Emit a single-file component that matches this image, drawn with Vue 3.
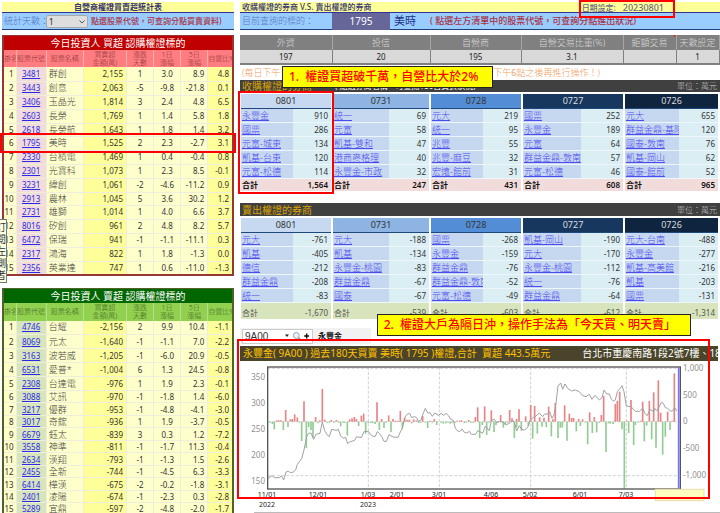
<script setup>
const buyRows = [
  ['3481', '群創', '2,155', '1', '3.0', '8.9', '4.8'],
  ['3443', '創意', '2,063', '-5', '-9.8', '-21.8', '0.1'],
  ['3406', '玉晶光', '1,814', '3', '2.4', '4.8', '6.5'],
  ['2603', '長榮', '1,769', '1', '1.4', '5.8', '1.8'],
  ['2618', '長榮航', '1,643', '1', '1.8', '1.4', '3.2'],
  ['1795', '美時', '1,525', '2', '2.3', '-2.7', '3.1'],
  ['2330', '台積電', '1,469', '1', '0.4', '-0.4', '0.8'],
  ['2301', '光寶科', '1,073', '1', '2.3', '8.5', '-0.1'],
  ['3231', '緯創', '1,061', '-2', '-4.6', '-11.2', '0.9'],
  ['2913', '農林', '1,045', '5', '3.6', '30.2', '1.2'],
  ['2731', '雄獅', '1,014', '1', '4.0', '6.6', '3.7'],
  ['8016', '矽創', '961', '2', '4.8', '8.2', '5.7'],
  ['6472', '保瑞', '941', '-1', '-1.1', '-11.1', '0.3'],
  ['2317', '鴻海', '822', '1', '1.8', '-1.3', '0.0'],
  ['2356', '英業達', '747', '1', '0.6', '-11.0', '-1.3'],
]
const sellRows = [
  ['4746', '台耀', '-2,156', '2', '9.9', '10.4', '-1.1'],
  ['8069', '元太', '-1,640', '-1', '-1.1', '7.0', '-2.2'],
  ['3163', '波若威', '-1,205', '-1', '-6.0', '20.9', '-0.5'],
  ['6531', '愛普*', '-1,004', '6', '1.3', '24.5', '-0.8'],
  ['2308', '台達電', '-976', '1', '1.9', '2.3', '-0.1'],
  ['3088', '艾訊', '-970', '-1', '-1.8', '1.4', '-6.0'],
  ['3217', '優群', '-953', '-1', '-4.8', '-4.1', '-3.0'],
  ['3017', '奇鋐', '-936', '1', '1.9', '-3.7', '-0.5'],
  ['6679', '鈺太', '-839', '3', '0.3', '1.2', '-7.2'],
  ['3558', '神準', '-811', '-1', '-1.7', '11.3', '-0.4'],
  ['2634', '漢翔', '-793', '-1', '-1.3', '1.5', '-2.6'],
  ['2455', '全新', '-744', '-1', '-4.5', '6.3', '-3.3'],
  ['6414', '樺漢', '-675', '-2', '-0.2', '-1.8', '-3.1'],
  ['2401', '凌陽', '-674', '-1', '-2.3', '0.3', '-2.8'],
  ['5289', '宜鼎', '-597', '-2', '-4.8', '-2.0', '-1.7'],
]
const rankings = [
  { kind: 'buy', title: '今日投資人 買超 認購權證標的', rows: buyRows, marked: 5 },
  { kind: 'sell', title: '今日投資人 賣超 認購權證標的', rows: sellRows, marked: -1 },
]
const boughtBy = [
  { day: '0801', rows: [['永豐金', '910'], ['國票', '286'], ['元富-城東', '134'], ['凱基-台東', '120'], ['元富-松德', '114']], total: '1,564' },
  { day: '0731', rows: [['統一', '69'], ['元富', '58'], ['凱基-雙和', '47'], ['港商麥格理', '40'], ['永豐金-市政', '32']], total: '247' },
  { day: '0728', rows: [['元大', '219'], ['統一', '95'], ['兆豐', '55'], ['兆豐-麻豆', '32'], ['宏遠-館前', '31']], total: '431' },
  { day: '0727', rows: [['國票', '252'], ['永豐金', '189'], ['元富', '64'], ['群益金鼎-敦南', '57'], ['元富-松德', '46']], total: '608' },
  { day: '0726', rows: [['元大', '655'], ['群益金鼎-基隆', '120'], ['國泰-敦南', '76'], ['凱基-岡山', '62'], ['國泰-館前', '52']], total: '965' },
]
const soldBy = [
  { day: '0801', rows: [['元大', '-761'], ['凱基', '-405'], ['德信', '-212'], ['群益金鼎', '-208'], ['統一', '-83']], total: '-1,670' },
  { day: '0731', rows: [['元大', '-188'], ['凱基', '-134'], ['永豐金-桃園', '-83'], ['群益金鼎', '-67'], ['國泰', '-67']], total: '-539' },
  { day: '0728', rows: [['國票', '-268'], ['永豐金', '-159'], ['群益金鼎', '-76'], ['群益金鼎-敦南', '-52'], ['元富-松德', '-49']], total: '-603' },
  { day: '0727', rows: [['凱基-岡山', '-190'], ['元大', '-170'], ['永豐金-桃園', '-112'], ['統一', '-76'], ['群益金鼎', '-64']], total: '-612' },
  { day: '0726', rows: [['元大-台南', '-488'], ['永豐金', '-277'], ['凱基-高美館', '-216'], ['凱基', '-203'], ['國票', '-131']], total: '-1,314' },
]

// Chart data: the plot group is drawn at three units to the pixel, zero line at 245.
const ZERO = 245
const gains = [
  [122, 241], [128, 241], [135, 241], [149, 210], [163, 238], [169, 237], [176, 223], [184, 232], [204, 184], [239, 231],
  [251, 241], [259, 147], [266, 239], [286, 240], [301, 240], [341, 238], [348, 235], [355, 231], [361, 237], [376, 227],
  [383, 221], [423, 187], [437, 237], [458, 226], [471, 237], [479, 242], [486, 242], [493, 213], [506, 233], [513, 239],
  [520, 239], [533, 238], [541, 241], [560, 228], [582, 242], [595, 237], [664, 242], [671, 242], [677, 241], [698, 240],
  [718, 231], [725, 202], [746, 199], [766, 211], [787, 243], [794, 225], [821, 210], [828, 235], [842, 237], [849, 208],
  [869, 229], [884, 195], [896, 198], [911, 232], [924, 233], [938, 200], [951, 238], [958, 189], [986, 196], [1000, 221],
  [1007, 234], [1013, 234], [1028, 237], [1040, 238], [1061, 217], [1075, 231], [1096, 225], [1103, 168], [1138, 192],
  [1144, 183], [1151, 155], [1172, 242], [1185, 180], [1214, 242], [1220, 185], [1240, 183], [1253, 157], [1267, 121],
  [1274, 218], [1295, 215], [1309, 242], [1315, 100],
]
const losses = [
  [102, 248], [109, 252], [115, 268], [142, 270], [156, 261], [190, 248], [197, 303], [211, 324], [218, 262], [225, 270],
  [231, 293], [246, 250], [273, 248], [280, 248], [293, 248], [307, 248], [314, 259], [321, 248], [327, 248], [334, 287],
  [368, 258], [389, 281], [397, 249], [404, 248], [410, 249], [417, 252], [430, 270], [444, 264], [451, 248], [465, 276],
  [499, 266], [527, 250], [548, 249], [554, 248], [568, 248], [575, 264], [589, 248], [602, 255], [615, 248], [622, 251],
  [629, 250], [637, 248], [643, 251], [650, 248], [657, 248], [685, 249], [692, 248], [705, 248], [711, 248], [731, 294],
  [739, 255], [752, 285], [760, 248], [774, 276], [780, 255], [802, 263], [808, 255], [815, 248], [835, 294], [842, 262],
  [856, 272], [877, 258], [890, 296], [904, 281], [918, 260], [931, 261], [946, 289], [966, 294], [973, 263], [979, 263],
  [993, 302], [1021, 274], [1033, 258], [1048, 248], [1055, 313], [1069, 279], [1082, 277], [1089, 248], [1110, 336],
  [1117, 250], [1123, 251], [1131, 252], [1158, 268], [1165, 446], [1178, 279], [1193, 315], [1198, 255], [1207, 248],
  [1225, 304], [1232, 257], [1247, 298], [1260, 323], [1280, 344], [1288, 290], [1302, 270],
]
const price =
  '95,416 108,407 115,413 130,413 136,408 143,420 150,396 157,394 163,398 172,396 179,390 184,373 190,365 197,356 204,330 212,290 218,280 225,279 233,298 240,283 252,280 259,246 266,272 273,284 280,290 287,268 300,271 307,268 314,288 321,295 329,292 335,311 341,306 356,301 362,290 376,293 384,275 397,274 404,284 411,289 418,289 424,275 431,281 437,289 444,304 451,304 459,284 471,291 486,292 493,276 499,265 506,233 513,223 521,220 527,233 535,230 541,232 547,243 554,242 561,222 568,205 575,219 582,218 589,229 596,219 608,226 615,220 623,226 631,220 637,227 644,238 652,241 658,265 665,273 671,275 678,267 685,277 692,279 700,274 706,283 719,283 725,272 732,275 740,280 748,258 760,272 766,242 775,238 782,248 790,245 800,246 812,254 823,248 830,240 836,250 842,273 850,257 858,269 866,270 875,262 883,240 892,232 900,228 910,219 920,230 926,222 935,222 941,215 948,235 954,225 960,190 966,138 974,129 980,148 987,132 995,145 1007,153 1018,150 1030,155 1040,167 1050,170 1060,163 1068,178 1077,166 1090,180 1098,173 1104,150 1112,162 1120,162 1126,177 1132,183 1138,180 1144,155 1152,146 1158,137 1164,155 1171,198 1185,200 1198,214 1210,214 1220,205 1227,221 1234,227 1242,208 1253,215 1256,205 1262,212 1270,200 1276,187 1282,190 1288,203 1295,205 1303,213 1310,213 1316,203 1323,213'
const leftTicks = [[350, 380], [300, 406], [250, 432], [200, 458], [150, 484]]
const rightTicks = [['1,000', 371], ['500', 398], ['0', 424], ['-500', 451], ['-1,000', 478]]
const dateTicks = [['11/01', 267], ['12/01', 318], ['1/03', 368], ['2/01', 397], ['3/01', 439], ['4/06', 491], ['5/02', 530], ['6/01', 580], ['7/03', 626]]
</script>

<template>
  <main class="page">
    <aside class="left">
      <h1 class="banner center">自營商權證買賣超統計表</h1>
      <div class="strip">
        <label for="days">統計天數：</label>
        <span class="pick">
          <select id="days"><option>1</option></select>
          <svg viewBox="0 0 6 4" class="chev"><path d="M.5 .5 3 3 5.5 .5" fill="none" stroke="#555" /></svg>
        </span>
        <span class="hint">點選股票代號，可查詢分點買賣資料)</span>
      </div>

      <table v-for="r in rankings" :key="r.kind" class="rank" :class="r.kind">
        <colgroup>
          <col class="w-no" /><col class="w-code" /><col class="w-name" /><col class="w-amt" />
          <col class="w-d" /><col class="w-d" /><col class="w-d" /><col class="w-ratio" />
        </colgroup>
        <thead>
          <tr class="title"><th colspan="8">{{ r.title }}</th></tr>
          <tr class="heads">
            <th>排名</th><th>股票代號</th><th>股票名稱</th><th>買賣超<br />金額(萬)</th>
            <th>漲跌<br />天數</th><th>1日<br />漲幅</th><th>5日<br />漲幅</th><th>自營比%</th>
          </tr>
        </thead>
        <tbody>
          <tr v-for="(row, i) in r.rows" :key="row[0]" :class="{ marked: i === r.marked }">
            <td class="num">{{ i + 1 }}</td>
            <td class="code"><a href="#">{{ row[0] }}</a></td>
            <td class="name">{{ row[1] }}</td>
            <td class="num hot">{{ row[2] }}</td>
            <td class="mid">{{ row[3] }}</td>
            <td class="mid">{{ row[4] }}</td>
            <td class="num">{{ row[5] }}</td>
            <td class="num hot">{{ row[6] }}</td>
          </tr>
        </tbody>
      </table>
      <div class="side-tab">訂閱左側者</div>
    </aside>

    <section class="right">
      <div class="banner split">
        <h2>收購權證的券商 V.S. 賣出權證的券商</h2>
        <div class="date"><span>日期設定:</span><span class="date-value">20230801</span></div>
      </div>
      <div class="strip query">
        <span class="ask">目前查詢的標的：</span>
        <strong class="ticker">1795</strong>
        <span class="stock">美時</span>
        <span class="hint wide">( 點選左方清單中的股票代號，可查詢分點進出狀況)</span>
      </div>

      <table class="stats">
        <colgroup><col class="s1" /><col class="s2" /><col class="s3" /><col class="s4" /><col class="s5" /><col class="s6" /></colgroup>
        <thead><tr><th>外資</th><th>投信</th><th>自營商</th><th>自營交易比重(%)</th><th class="noted">鉅額交易</th><th>天數設定</th></tr></thead>
        <tbody><tr><td>197</td><td>20</td><td>195</td><td>3.1</td><td></td><td>1</td></tr></tbody>
      </table>

      <div class="notice">
        <span>(每日下午</span><span>下午<b>6</b>點之後再進行操作！)</span>
        <p class="callout first">1.&nbsp; 權證買超破千萬，自營比大於2%</p>
      </div>

      <div class="bar">
        <h3>收購權證的券商</h3><span class="bar-note">( 點選券商名稱，可查閱180日買賣狀況)</span><span class="unit">單位：萬元</span>
      </div>
      <div class="brokers bought">
        <table v-for="(g, i) in boughtBy" :key="g.day" :class="['g' + i, { framed: i === 0 }]">
          <colgroup><col class="w-who" /><col /></colgroup>
          <thead><tr><th colspan="2">{{ g.day }}</th></tr></thead>
          <tbody>
            <tr v-for="row in g.rows" :key="row[0]"><td class="who"><a href="#">{{ row[0] }}</a></td><td class="num">{{ row[1] }}</td></tr>
          </tbody>
          <tfoot><tr><td>合計</td><td class="num">{{ g.total }}</td></tr></tfoot>
        </table>
      </div>

      <div class="bar second"><h3>賣出權證的券商</h3><span class="unit">單位：萬元</span></div>
      <div class="brokers sold">
        <table v-for="(g, i) in soldBy" :key="g.day" :class="'g' + i">
          <colgroup><col class="w-who" /><col /></colgroup>
          <thead><tr><th colspan="2">{{ g.day }}</th></tr></thead>
          <tbody>
            <tr v-for="row in g.rows" :key="row[0]"><td class="who"><a href="#">{{ row[0] }}</a></td><td class="num">{{ row[1] }}</td></tr>
          </tbody>
          <tfoot><tr><td>合計</td><td class="num">{{ g.total }}</td></tr></tfoot>
        </table>
        <p class="callout last">2.&nbsp; 權證大戶為隔日沖，操作手法為「今天買、明天賣」</p>
      </div>

      <div class="finder">
        <div class="combo">
          <select aria-label="券商"><option>9A00</option></select>
          <svg viewBox="0 0 28 10" class="tools">
            <path d="M1 3.500h4L3 6z" fill="#222" />
            <circle cx="12.500" cy="4.500" r="3" fill="#e8f1fa" stroke="#9aa3b0" />
            <path d="M14.800 6.800 17 9" stroke="#a98a5c" stroke-width="1.500" />
            <path d="M20.500 5h5M23 2.500v5" stroke="#111" stroke-width="1.500" />
          </svg>
        </div>
        <b>永豐金</b>
      </div>

      <figure class="chart">
        <figcaption>
          <span>永豐金( 9A00 ) 過去180天買賣 美時( 1795 )權證,合計&nbsp; 賣超 443.5萬元</span>
          <span class="addr">台北市重慶南路1段2號7樓、18樓</span>
        </figcaption>
        <svg class="plot" viewBox="240 361 480 152">
          <g transform="translate(236 340) scale(.33333)" fill="none">
            <g stroke="#d2d2d2" stroke-width="3" stroke-dasharray="9 5">
              <path d="M95 85H1330M95 245H1330M95 407H1330M397 82V446M610 82V446M884 82V446M1171 82V446" />
            </g>
            <path v-for="b in losses" :key="'l' + b[0]" :d="`M${b[0]} ${ZERO}V${b[1]}`" stroke="#93cc93" stroke-width="5" />
            <path v-for="b in gains" :key="'g' + b[0]" :d="`M${b[0]} ${ZERO}V${b[1]}`" stroke="#e88484" stroke-width="5" />
            <polyline :points="price" stroke="#a0a0a0" stroke-width="3" stroke-linejoin="round" />
            <rect x="95" y="81" width="1238" height="366" stroke="#555" stroke-width="4" />
            <path d="M1328 83V445" stroke="#7474f4" stroke-width="5" />
            <rect x="1258" y="448" width="146" height="34" fill="#ffffc0" stroke="#e6dfa8" stroke-width="3" />
          </g>
          <g class="axis">
            <text v-for="t in leftTicks" :key="t[0]" x="265" :y="t[1]" text-anchor="end">{{ t[0] }}</text>
            <text v-for="t in rightTicks" :key="t[0]" x="683" :y="t[1]">{{ t[0] }}</text>
          </g>
          <g class="dates">
            <text v-for="t in dateTicks" :key="t[0]" :x="t[1]" y="497" text-anchor="middle">{{ t[0] }}</text>
            <text x="267" y="507" text-anchor="middle">2022</text>
            <text x="368" y="507" text-anchor="middle">2023</text>
          </g>
          <path d="M254 512.500H720" stroke="#bbb" />
        </svg>
        <div class="frame"></div>
      </figure>
    </section>
  </main>
</template>

<style>
body { margin: 0; background: #fff; }
</style>

<style scoped>
* { box-sizing: border-box; }
.page {
  display: grid;
  grid-template-columns: 232fr 480fr;
  column-gap: 6px;
  padding: 2px 0 0 2px;
  max-height: 100vh;
  overflow: hidden;
  font-family: "Noto Sans", "Noto Sans CJK TC", sans-serif;
  font-size: 8px;
  line-height: 12px;
  color: #333;
}
.left, .right { position: relative; min-width: 0; white-space: nowrap; }
h1, h2, h3, p, figure { margin: 0; font-size: inherit; font-weight: inherit; }
table { border-collapse: collapse; table-layout: fixed; width: 100%; }
th, td { padding: 0; font-weight: 400; overflow: hidden; }
a { color: #2a2ae8; }

.banner {
  height: 11px;
  line-height: 10px;
  background: #ffff99;
  border-bottom: 1px solid #333399;
  color: #333377;
}
.banner.center { text-align: center; font-weight: 700; }
.split { display: flex; justify-content: space-between; padding-left: 2px; font-weight: 500; }
.date {
  display: flex;
  gap: 7px;
  height: 14px;
  line-height: 11px;
  padding: 0 9px 0 1px;
  margin-right: 47px;
  outline: 2px solid #f00;
  color: #666688;
  z-index: 2;
}
.date-value { font-size: 9px; }
.strip {
  display: flex;
  align-items: center;
  height: 17px;
  margin-bottom: 5px;
  padding-left: 2px;
  background: #99ccff;
  border-bottom: 1px solid #1f3f7f;
}
.strip label, .ask { color: #5577bb; font-size: 9px; font-weight: 300; }
.strip label { width: 42px; }
.pick { position: relative; display: flex; margin-right: 3px; }
.pick select {
  appearance: none;
  width: 42px;
  height: 13px;
  padding: 0 2px;
  border: 1px solid #aaa;
  border-radius: 2px;
  background: #dedede;
  font: inherit;
  line-height: 11px;
  color: #222;
}
.chev { position: absolute; right: 3px; top: 5px; width: 6px; height: 4px; }
.hint { color: #aa3344; font-weight: 500; }
.hint.wide { font-size: 9px; }
.ask { width: 90px; }
.ticker { width: 58px; height: 17px; line-height: 17px; background: #666699; color: #fff; text-align: center; font-size: 10px; font-weight: 400; }
.stock { width: 40px; padding-left: 4px; color: #223388; font-size: 11px; }

.rank { border: 2px solid #953735; border-top-width: 1px; margin-bottom: 12px; }
.w-no { width: 13px; } .w-code { width: 30px; } .w-name { width: 37px; } .w-amt { width: 43px; }
.w-d { width: 27px; } .w-ratio { width: 25px; }
.rank .title th { height: 14px; line-height: 14px; background: #c00000; color: #fff; font-size: 10px; }
.rank .heads th { height: 17px; line-height: 8px; background: #ff7c80; color: #883333; font-size: 7px; font-weight: 300; border-right: 1px solid #ffb0a8; }
.rank tbody td { height: 14px; line-height: 12px; background: #ffffcc; border-right: 1px solid #eeeedd; border-bottom: 1px solid #eeeedd; }
.rank.buy tbody tr:nth-child(5n) td { height: 13px; }
.rank tbody .num, .brokers .num { text-align: right; padding-right: 3px; }
.rank tbody .num:first-child { padding-right: 2px; }
.rank tbody .mid { text-align: center; }
.rank tbody .code { text-align: center; background: #f2dcdb; }
.rank tbody .name { padding-left: 2px; font-size: 9px; font-weight: 300; color: #444; }
.rank tbody .hot { background: #ffff99; }
.rank .marked { outline: 2px solid #f00; outline-offset: 1px; }
.rank.sell { border-color: #4f6228; }
.rank.sell .title th { background: #006600; }
.rank.sell .heads th { height: 18px; background: #92d050; color: #3c6420; border-color: #b5e08a; }
.rank.sell .code { background: #d7e4bc; }
.rank.sell tbody tr:nth-child(n + 6) td { height: 12px; line-height: 11px; }
.rank.sell tbody tr:nth-child(2n + 7) td { height: 13px; }

.side-tab {
  position: absolute;
  left: -2px;
  top: 217px;
  width: 7px;
  padding: 1px 0;
  background: #ffffe1;
  border: 1px solid #777;
  border-left: 0;
  overflow: hidden;
  white-space: normal;
  word-break: break-all;
  font-size: 10px;
  line-height: 12px;
  direction: rtl;
}

.stats { width: calc(100% - 1px); border-bottom: 2px solid #808080; }
.s1 { width: 92px; } .s2 { width: 98px; } .s3 { width: 91px; } .s4 { width: 102px; } .s5 { width: 53px; } .s6 { width: 43px; }
.stats th, .stats td { height: 15px; text-align: center; border-right: 1px solid #a6a6a6; }
.stats th { background: #808080; color: #d9d9d9; font-size: 9px; font-weight: 300; }
.stats td { height: 14px; background: #d9d9d9; border-color: #808080; color: #222; }
.stats .noted { background: linear-gradient(225deg, #d22 2px, #808080 2px); }
.notice {
  position: relative;
  display: flex;
  justify-content: space-between;
  height: 15px;
  line-height: 16px;
  padding: 0 120px 0 2px;
  color: #f0a060;
  font-size: 9px;
  font-weight: 300;
}
.callout {
  position: absolute;
  z-index: 3;
  padding: 0 14px 0 6px;
  background: #ff0;
  border: 1px solid #222;
  color: #f00;
  font-size: 12px;
  font-weight: 500;
  line-height: 20px;
}
.callout.first { left: 42px; top: 1px; }
.callout.last { right: 29px; top: 96px; }

.bar { display: flex; align-items: center; height: 12px; padding: 0 3px 0 2px; margin-bottom: 2px; background: #404040; color: #c8c8c8; }
.bar h3 { color: #d9a300; font-size: 10px; width: 93px; }
.bar.second { height: 13px; margin-top: 12px; }
.bar-note { color: #fff; }
.unit { margin-left: auto; font-weight: 300; }

.brokers { position: relative; display: grid; grid-template-columns: 90fr 96fr 90fr 100fr 93fr; gap: 2px; padding: 0 2px 0 1px; }
.w-who { width: 58%; }
.brokers th { height: 14px; line-height: 12px; border-bottom: 1px solid #1f497d; color: #333; font-size: 9px; }
.g0 th { background: #c6d9f1; } .g1 th { background: #8db4e2; } .g2 th { background: #538dd5; }
.g3 th { background: #17375e; } .g4 th { background: #0f243e; }
.brokers .g3 th, .brokers .g4 th { color: #ddd; }
.brokers tbody td { height: 14px; line-height: 13px; background: #daeef3; border-bottom: 1px solid #eef6fb; }
.brokers tbody .who { padding-left: 1px; background: #c6d7f0; font-size: 9px; font-weight: 300; }
.who a { color: #4c4cf0; }
.brokers tfoot td { height: 13px; line-height: 12px; background: #f2dcdb; color: #111; font-weight: 600; padding-left: 1px; }
.sold tfoot td { height: 17px; padding-top: 4px; background: #d7e4bc; color: #555; font-weight: 400; }
.framed { outline: 2px solid #f00; outline-offset: 1px; z-index: 2; position: relative; }

.finder { display: flex; align-items: center; width: 131px; height: 16px; margin-top: 9px; padding-left: 2px; background: #f2f2f2; color: #111; gap: 5px; }
.combo { display: flex; align-items: center; width: 71px; height: 15px; background: #fff; border: 1px solid #ccc; }
.combo select { appearance: none; width: 42px; height: 13px; padding: 0 2px; border: 0; background: #fff; color: #333; font-family: "Liberation Sans", sans-serif; font-size: 10px; }
.tools { width: 28px; height: 10px; }

.chart { position: relative; margin-top: 2px; }
.chart figcaption { display: flex; gap: 32px; height: 15px; line-height: 15px; padding-left: 3px; margin-right: 2px; background: #4a452a; color: #ffc000; font-size: 10px; overflow: hidden; }
.addr { color: #fff; }
.plot { display: block; width: 100%; }
.axis { font-size: 8px; fill: #909090; }
.dates { font-size: 7px; fill: #222; }
.frame { position: absolute; left: -3px; right: 10px; top: -7px; bottom: 14px; border: 2px solid #f00; }
</style>
